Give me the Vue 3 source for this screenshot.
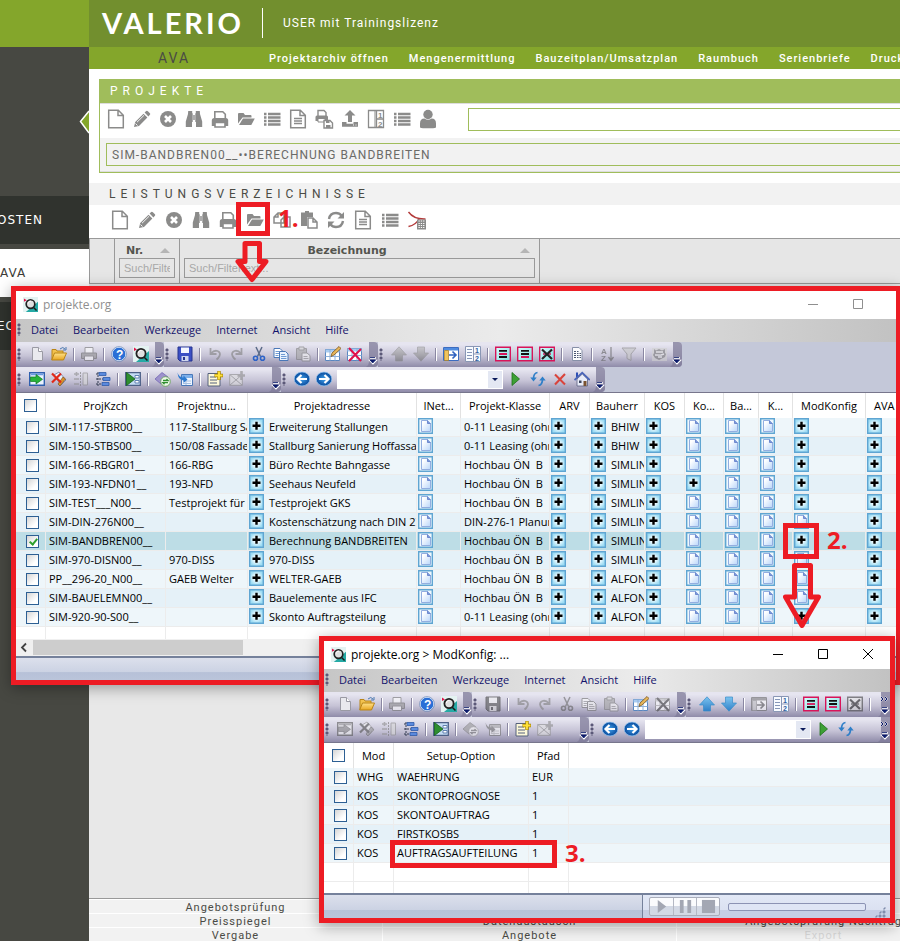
<script setup>
const pageTools = ['file', 'pencil', 'cancel', 'bino', 'printer', 'folder', 'list', 'text', 'printsave', 'upload', 'split', 'list', 'user']
const listTools = ['file', 'pencil', 'cancel', 'bino', 'printer', 'folder', 'copies', 'clip', 'sync', 'text', 'list', 'calc']
const navItems = ['Projektarchiv öffnen', 'Mengenermittlung', 'Bauzeitplan/Umsatzplan', 'Raumbuch', 'Serienbriefe', 'Druck']
const menu = ['Datei', 'Bearbeiten', 'Werkzeuge', 'Internet', 'Ansicht', 'Hilfe']
const footer = [
  [{ t: 'Angebotsprüfung' }, { t: 'Preisspiegel' }, { t: 'Vergabe' }],
  [{ t: '' }, { t: 'Datenaustausch' }, { t: 'Angebote' }],
  [{ t: '' }, { t: 'Angebotsprüfung Nachtrag' }, { t: 'Export', dim: true }],
]

/* "|" is a separator, a leading "-" marks a disabled tool */
const tools = (s) => s.split(' ').map((k) => ({ key: k.replace('-', ''), off: k[0] === '-', sep: k === '|' }))

const project = (id, nr, addr, klass, owner, kos = 'doc', mod = 'plus', checked = false) => ({
  checked,
  cells: [
    { t: id }, { t: nr }, { i: 'plus', t: addr }, { i: 'doc' }, { t: klass }, { i: 'plus' },
    { i: 'plus', t: owner }, { i: 'plus' }, { i: kos }, { i: 'doc' }, { i: 'doc' }, { i: mod }, { i: 'plus' },
  ],
})
const option = (mod, name, value) => ({ checked: false, cells: [{ t: mod }, { t: name }, { t: value }, { t: '' }] })

const windows = [
  {
    id: 'projects', title: 'projekte.org', active: false,
    bars: [
      [
        { tools: tools('new open | -printer | help logo') },
        { tools: tools('save | -undo -redo cut copy -paste | gridedit griddel') },
        { tools: tools('-up -down | panel cols | eqa eqb eqx | page | -sort -filter | -gear') },
      ],
      [
        { tools: tools('go strike -align tree | run | house import | note -mail'), pad: true },
        { tools: tools('back fwd'), combo: true, after: tools('play reload cross home') },
      ],
    ],
    cols: [['ProjKzch', 120], ['Projektnu...', 82], ['Projektadresse', 169], ['INet...', 44], ['Projekt-Klasse', 89], ['ARV', 40],
      ['Bauherr', 55], ['KOS', 40], ['Ko...', 39], ['Ba...', 35], ['K...', 34], ['ModKonfig', 73], ['AVA', 0]],
    rows: [
      project('SIM-117-STBR00__', '117-Stallburg Sa', 'Erweiterung Stallungen', '0-11 Leasing (ohne', 'BHIW'),
      project('SIM-150-STBS00__', '150/08 Fassaden', 'Stallburg Sanierung Hoffassade', '0-11 Leasing (ohne', 'BHIW'),
      project('SIM-166-RBGR01__', '166-RBG', 'Büro Rechte Bahngasse', 'Hochbau ÖN\u00a0 B', 'SIMLING'),
      project('SIM-193-NFDN01__', '193-NFD', 'Seehaus Neufeld', 'Hochbau ÖN\u00a0 B', 'SIMLING', 'plus'),
      project('SIM-TEST___N00__', 'Testprojekt für', 'Testprojekt GKS', 'Hochbau ÖN\u00a0 B', 'SIMLING'),
      project('SIM-DIN-276N00__', '', 'Kostenschätzung nach DIN 276', 'DIN-276-1 Planung', 'SIMLING', 'doc', 'doc'),
      project('SIM-BANDBREN00__', '', 'Berechnung BANDBREITEN', 'Hochbau ÖN\u00a0 B', 'SIMLING', 'doc', 'plus', true),
      project('SIM-970-DISN00__', '970-DISS', '970-DISS', 'Hochbau ÖN\u00a0 B', 'SIMLING', 'doc', 'doc'),
      project('PP__296-20_N00__', 'GAEB Welter', 'WELTER-GAEB', 'Hochbau ÖN\u00a0 B', 'ALFONS', 'doc', 'doc'),
      project('SIM-BAUELEMN00__', '', 'Bauelemente aus IFC', 'Hochbau ÖN\u00a0 B', 'ALFONS', 'doc', 'doc'),
      project('SIM-920-90-S00__', '', 'Skonto Auftragsteilung', '0-11 Leasing (ohne', 'ALFONS'),
    ],
  },
  {
    id: 'config', title: 'projekte.org > ModKonfig: ...', active: true,
    bars: [
      [
        { tools: tools('new open | -printer | help logo') },
        { tools: tools('-save | -undo -redo -cut -copy -paste | gridedit -griddel') },
        { tools: tools('up down | -panel cols | eqa eqb -eqx |'), fill: true },
      ],
      [
        { tools: tools('-go -strike -align tree | run | -house -import | note -mail'), pad: true },
        { tools: tools('back fwd'), combo: true, after: tools('play reload'), fill: true },
      ],
    ],
    cols: [['Mod', 40], ['Setup-Option', 135], ['Pfad', 40], ['', 0]],
    rows: [
      option('WHG', 'WAEHRUNG', 'EUR'),
      option('KOS', 'SKONTOPROGNOSE', '1'),
      option('KOS', 'SKONTOAUFTRAG', '1'),
      option('KOS', 'FIRSTKOSBS', '1'),
      option('KOS', 'AUFTRAGSAUFTEILUNG', '1'),
    ],
  },
]
</script>

<template>
  <div class="desktop">
    <svg class="sprite" aria-hidden="true">
      <defs>
        <linearGradient id="gFolder" x1="0" y1="0" x2="0" y2="1"><stop offset="0" stop-color="#ffe28a" /><stop offset="1" stop-color="#e8a520" /></linearGradient>
        <linearGradient id="gBlue" x1="0" y1="0" x2="0" y2="1"><stop offset="0" stop-color="#7cc4f0" /><stop offset="1" stop-color="#2f80c8" /></linearGradient>
        <radialGradient id="gBall"><stop offset="0" stop-color="#3ea0ea" /><stop offset="1" stop-color="#0a4a9c" /></radialGradient>
        <radialGradient id="gPlus"><stop offset="0.3" stop-color="#f4fdff" /><stop offset="1" stop-color="#9ddcf4" /></radialGradient>
        <linearGradient id="gDoc" x1="0" y1="0" x2="1" y2="1"><stop offset="0.2" stop-color="#fff" /><stop offset="1" stop-color="#b9d6fa" /></linearGradient>
        <linearGradient id="gTeal" x1="0" y1="0" x2="1" y2="1"><stop offset="0" stop-color="#d8ffff" /><stop offset="1" stop-color="#7fdede" /></linearGradient>
      </defs>

      <!-- page icons, 20 x 20 -->
      <symbol id="file" viewBox="0 0 20 20"><path d="M2.700 1.200h9.600l5 5v12.600H2.700zM12 1.200v5.300h5.300" fill="none" stroke="#8b8b8a" stroke-width="1.500" /></symbol>
      <symbol id="pencil" viewBox="0 0 20 20"><path d="M2 18l1.200-5 8.300-8.300 3.900 3.900L7 16.900zM12.600 3.600l1.600-1.500q.8-.7 1.700.1l2 2q.8.8 0 1.600l-1.500 1.600z" fill="#8b8b8a" /><path d="M5 13.200L12 6.300M3.500 14.500l2 2" stroke="#fff" stroke-width=".9" /></symbol>
      <symbol id="cancel" viewBox="0 0 20 20"><circle cx="10" cy="10" r="8" fill="#8b8b8a" /><path d="M7 7l6 6M13 7l-6 6" stroke="#fff" stroke-width="2.600" /></symbol>
      <symbol id="bino" viewBox="0 0 20 20"><path d="M4.200 2h4v2.200H9V13H8v5H1.800v-5.500L4 5zM15.800 2h-4v2.200H11V13h1v5h6.200v-5.500L16 5z" fill="#8b8b8a" /><path d="M9 6h2v5H9z" fill="#8b8b8a" /><path d="M9 4v9M11 4v9" stroke="#fff" stroke-width=".6" /></symbol>
      <symbol id="printer" viewBox="0 0 20 20"><path d="M4.800 10V2.800h8l2.500 2.500V10" fill="#fff" stroke="#8b8b8a" stroke-width="1.600" /><path d="M1.800 17V11.500q0-2.500 2.500-2.500h11.400q2.500 0 2.500 2.500V17z" fill="#8b8b8a" /><path d="M5 13.500h10V18H5z" fill="#fff" stroke="#8b8b8a" stroke-width="1.600" /></symbol>
      <symbol id="folder" viewBox="0 0 20 20"><path d="M2 14.500V5q0-1 1-1h4.500l1.500 2h5.500q1 0 1 1v1.500H6.500z" fill="#8b8b8a" /><path d="M7 9.500h11.800l-3.500 6.500H3z" fill="#8b8b8a" /></symbol>
      <symbol id="list" viewBox="0 0 20 20"><path d="M2 5h2.500M6 5h12.500M2 8.500h2.500M6 8.500h12.500M2 12h2.500M6 12h12.500M2 15.500h2.500M6 15.500h12.500" stroke="#8b8b8a" stroke-width="2.400" /></symbol>
      <symbol id="text" viewBox="0 0 20 20"><path d="M2.700 1.200h9.600l5 5v12.600H2.700zM12 1.200v5.300h5.300M6 9.500h8M6 12h8M6 14.500h8" fill="none" stroke="#8b8b8a" stroke-width="1.500" /></symbol>
      <symbol id="printsave" viewBox="0 0 20 20"><path d="M4 7V1.500h6l2 2V7" fill="none" stroke="#8b8b8a" stroke-width="1.400" /><path d="M1.500 12V8q0-1.500 1.500-1.500h9.500q1.500 0 1.500 1.500v4z" fill="#8b8b8a" /><path d="M4 9.500h7V13H4z" fill="#fff" stroke="#8b8b8a" /><path d="M10 11.500h6l2.500 2.500v5H10z" fill="#fff" stroke="#8b8b8a" stroke-width="1.400" /><path d="M12 11.500h3.500V14H12zM12 16h4.500v3H12z" fill="#8b8b8a" /></symbol>
      <symbol id="upload" viewBox="0 0 20 20"><path d="M10 1l5.500 5.500H12V13H8V6.500H4.500z" fill="#8b8b8a" /><path d="M2 13h4.500v1.800h7V13H18v4.800H2z" fill="#8b8b8a" /><path d="M13 16h1M15.500 16h1" stroke="#fff" /></symbol>
      <symbol id="split" viewBox="0 0 20 20"><path d="M2.500 1.500h15v17h-15zM10.500 1.500v17M10.500 10h7" fill="none" stroke="#8b8b8a" stroke-width="1.300" /><path d="M9 2v16" stroke="#8b8b8a" stroke-width="2" stroke-opacity=".5" /><text x="12" y="9" class="digit">1</text><text x="12" y="17.500" class="digit">2</text></symbol>
      <symbol id="user" viewBox="0 0 20 20"><circle cx="10" cy="5.500" r="4.700" fill="#8b8b8a" /><path d="M2 18.500v-4Q2 9.500 6.500 9.500q3.500 2.500 7 0Q18 9.500 18 14.500v4q-1 .8-3 .8H5q-2 0-3-.8z" fill="#8b8b8a" /></symbol>
      <symbol id="copies" viewBox="0 0 20 20"><path d="M6 3h6v10H2V7zM6 3v4H2M9 10l3-3h6v10H9z" fill="none" stroke="#8b8b8a" stroke-width="1.500" /></symbol>
      <symbol id="clip" viewBox="0 0 20 20"><path d="M2 2.500h4V1h4v1.500h4V7H8v9H2z" fill="#8b8b8a" /><path d="M9 8h5l4 4v6H9zM14 8v4h4" fill="#fff" stroke="#8b8b8a" stroke-width="1.500" /></symbol>
      <symbol id="sync" viewBox="0 0 20 20"><path d="M3 9q1-6 7-6 3.500 0 5.500 2.500M17 11q-1 6-7 6-3.500 0-5.500-2.500" fill="none" stroke="#8b8b8a" stroke-width="2.400" /><path d="M18 2v6.500h-6.500zM2 18v-6.500h6.500z" fill="#8b8b8a" /></symbol>
      <symbol id="calc" viewBox="0 0 20 20"><path d="M1.500 2Q7 9.500 18.500 9M1.500 16.500Q9 15 12 9" fill="none" stroke="#b33a3a" stroke-width="1.400" /><path d="M10 9.500h9v10h-9z" fill="#8b8b8a" /><path d="M11.500 11h6M11.500 13.500h6M11.500 15.500h6M11.500 17.500h6" stroke="#fff" stroke-dasharray="1.300 1" /></symbol>

      <!-- window icons, 16 x 16 -->
      <symbol id="new" viewBox="0 0 16 16"><path d="M3.500 1.500h6l4 4v9h-10z" fill="#e9e9ee" stroke="#9a9aa4" /><path d="M9.500 1.500v4h4" fill="#fff" stroke="#9a9aa4" /></symbol>
      <symbol id="open" viewBox="0 0 16 16"><path d="M1 13.500V3.500h4l1 1.500h6v3" fill="#f2c24e" stroke="#b98417" /><path d="M.7 14l2.800-7h12L12.500 14z" fill="url(#gFolder)" stroke="#b98417" /><path d="M9 3q3-3 5 0m1-2v3h-3" fill="none" stroke="#4a78b0" /></symbol>
      <symbol id="printer16" viewBox="0 0 16 16"><path d="M4 7V1.500h8V7" fill="#fff" stroke="#6f7787" /><path d="M.5 7h15v5.500H.5z" fill="#8b93a5" stroke="#626a7a" /><path d="M3.500 10h9v4.500h-9z" fill="#fff" stroke="#6f7787" /></symbol>
      <symbol id="help" viewBox="0 0 16 16"><circle cx="8" cy="8" r="6.800" fill="#2a6fd6" stroke="#dce9fb" /><circle cx="8" cy="8" r="7.400" fill="none" stroke="#5b7cb0" stroke-width=".6" /><text x="5" y="12.500" class="mark">?</text></symbol>
      <symbol id="logo" viewBox="0 0 16 16"><path d="M0 0h16v16H0z" fill="#e4f3f2" /><path d="M16 5v11H3z" fill="#25aaa5" /><path d="M1 1.500l3 2-3 1.500z" fill="#e0144c" /><path d="M11 11l3.500 3.500" stroke="#1a1a1a" stroke-width="1.500" /><circle cx="8" cy="7.500" r="4.600" fill="#e0e0e0" stroke="#222" stroke-width="1.800" /><path d="M5.500 7a2.500 2.500 0 0 1 3-2.500" stroke="#fff" fill="none" /></symbol>
      <symbol id="save" viewBox="0 0 16 16"><path d="M1 1h14v14H3L1 13z" fill="#3b4fc4" stroke="#26348f" /><path d="M4 1.500h8V7H4z" fill="#f3f6ff" /><path d="M4.500 10h7v5h-7z" fill="#cfd6ee" /><path d="M6 11h2v3H6z" fill="#26348f" /></symbol>
      <symbol id="undo" viewBox="0 0 16 16"><path d="M3.500 2v6h6M4 7.500Q7 4 10.500 5q3.500 1.500 2 5-1 2-3 3.500" fill="none" stroke="#77809a" stroke-width="1.800" /></symbol>
      <symbol id="redo" viewBox="0 0 16 16"><path d="M12.500 2v6h-6M12 7.500Q9 4 5.500 5 2 6.500 3.500 10q1 2 3 3.500" fill="none" stroke="#77809a" stroke-width="1.800" /></symbol>
      <symbol id="cut" viewBox="0 0 16 16"><path d="M5 1l4.500 9.500M11 1L6.500 10.500" stroke="#5b6b88" stroke-width="1.500" /><circle cx="4.500" cy="12.200" r="2" fill="none" stroke="#2d63c8" stroke-width="1.600" /><circle cx="11.500" cy="12.200" r="2" fill="none" stroke="#2d63c8" stroke-width="1.600" /></symbol>
      <symbol id="copy" viewBox="0 0 16 16"><path d="M1 2.500h6l2.500 2.500v6.500H1z" fill="#fff" stroke="#4a78b8" /><path d="M2.500 5.500h4M2.500 7.500h4M2.500 9.500h3" stroke="#6f9ad4" /><path d="M6.500 5.500h6l2.500 2.500v6.500H6.500z" fill="#e9f2ff" stroke="#4a78b8" /><path d="M8 8.500h4M8 10.500h5.500M8 12.500h5.500" stroke="#6f9ad4" /></symbol>
      <symbol id="paste" viewBox="0 0 16 16"><path d="M1.500 2.500h10v11h-10z" fill="#a0a4b2" stroke="#777c8c" /><path d="M4 1h5v3H4z" fill="#d6d8df" stroke="#777c8c" /><path d="M7 7h5l3 2.500V15H7z" fill="#f4f4f7" stroke="#777c8c" /><path d="M8.500 10.500h4M8.500 12.500h5" stroke="#9297a5" /></symbol>
      <symbol id="gridedit" viewBox="0 0 16 16"><path d="M.5 3.500h14v11H.5z" fill="#fff" stroke="#5a86bf" /><path d="M.5 3.500h14v3H.5z" fill="#a9cbf0" /><path d="M.5 10.500h14M5 4v10.500M10 4v10.500" stroke="#8fb1da" /><path d="M6 10.500l1-3.500 7-6.500 2 2-7 6.500z" fill="#e7b65a" stroke="#7a5520" stroke-width=".8" /></symbol>
      <symbol id="griddel" viewBox="0 0 16 16"><path d="M.5 2.500h14v12H.5z" fill="#fff" stroke="#5a86bf" /><path d="M.5 2.500h14v3H.5z" fill="#a9cbf0" /><path d="M.5 9.500h14M5 3v11.500M10 3v11.500" stroke="#8fb1da" /><path d="M2 2l12 13M14 3L2 15" stroke="#e0104a" stroke-width="2" /></symbol>
      <symbol id="up" viewBox="0 0 16 16"><path d="M8 .8L15.500 9H11.500v6h-7V9H.5z" fill="url(#gBlue)" stroke="#3a8cc8" stroke-width=".7" /></symbol>
      <symbol id="down" viewBox="0 0 16 16"><path d="M8 15.200L.5 7h4V1h7v6h4z" fill="url(#gBlue)" stroke="#3a8cc8" stroke-width=".7" /></symbol>
      <symbol id="panel" viewBox="0 0 16 16"><path d="M.5 1.500h15v13H.5z" fill="#fff" stroke="#3c6cc0" /><path d="M1 2h14v2.500H1z" fill="#4f8be0" /><path d="M1.500 4.500h4v10h-4z" fill="#f1c45b" stroke="#a87d1c" stroke-width=".7" /><path d="M6 9h6M9.500 5.500L13 9l-3.500 3.500" fill="none" stroke="#2f62c0" stroke-width="1.600" /></symbol>
      <symbol id="cols" viewBox="0 0 16 16"><path d="M.5 .5h15v15H.5zM8.500 .5v15M8.500 8h7" fill="#f8fbff" stroke="#8a97b5" /><path d="M2 3.500h5M2 6.500h5M2 9.500h5M2 12.500h5" stroke="#8596b8" /><text x="10" y="7" class="tiny">1</text><text x="10" y="14.500" class="tiny">2</text></symbol>
      <symbol id="eqa" viewBox="0 0 16 16"><path d="M.7 1.200h14.600v13.600H.7z" fill="url(#gTeal)" stroke="#d8145a" stroke-width="1.400" /><path d="M4 4.800h8M4 11h8" stroke="#111" stroke-width="1.800" /><path d="M4 8h8" stroke="#d8145a" stroke-width="1.800" /></symbol>
      <symbol id="eqb" viewBox="0 0 16 16"><path d="M.7 1.200h14.600v13.600H.7z" fill="url(#gTeal)" stroke="#d8145a" stroke-width="1.400" /><path d="M4 4.800h8M4 8h8" stroke="#111" stroke-width="1.800" /><path d="M4 11h8" stroke="#d8145a" stroke-width="1.800" /></symbol>
      <symbol id="eqx" viewBox="0 0 16 16"><path d="M.7 1.200h14.600v13.600H.7z" fill="url(#gTeal)" stroke="#d8145a" stroke-width="1.400" /><path d="M4 8h8" stroke="#d8145a" stroke-width="1.500" /><path d="M3 3.500l10 9.500M13 3.500L3 13" stroke="#222" stroke-width="2.200" /></symbol>
      <symbol id="page" viewBox="0 0 16 16"><path d="M3.500 1.500h6.500l3 3v10H3.500z" fill="#fbfbfd" stroke="#8790a8" /><path d="M5 5.500h2M8 5.500h1.500M5 7.500h2M8 7.500h1.500M10.500 7.500H12M5 9.500h2M8 9.500h1.500M10.500 9.500H12M5 11.500h2M8 11.500h1.500M10.500 11.500H12" stroke="#4b5570" /></symbol>
      <symbol id="sort" viewBox="0 0 16 16"><text x="2" y="7.500" class="small">A</text><text x="2" y="15" class="small">Z</text><path d="M12 1v12M9.500 11L12 14.500l2.500-3.500" fill="none" stroke="#5c6070" stroke-width="1.300" /></symbol>
      <symbol id="filter" viewBox="0 0 16 16"><path d="M1 2h14L10 8v6.500l-4-2V8z" fill="#c3c6d0" stroke="#83889a" /></symbol>
      <symbol id="gear" viewBox="0 0 16 16"><path d="M1 2h15v13H1z" fill="#cfd1da" /><path d="M3 3l2 1.500L8 3l3 1.500L14 3v4l1 1-1 3-3 1.500L8 14l-4-2-2-3 1-2z" fill="#777b8a" /><path d="M5 6h7M4 9h6l3-1M7 11h4" stroke="#ececf2" stroke-width="1.400" /></symbol>
      <symbol id="go" viewBox="0 0 16 16"><path d="M.7 1.700h14.600v12.600H.7z" fill="#eaf2ff" stroke="#2f5fae" stroke-width="1.400" /><path d="M2 2.500h12v1.800H2z" fill="#6b9ae0" /><path d="M1.500 6H7V3.500l6.500 4.800L7 13v-2.500H1.500z" fill="#27b33a" stroke="#107a20" stroke-width=".7" /></symbol>
      <symbol id="strike" viewBox="0 0 16 16"><path d="M3 4l5-3 7 8-5 5z" fill="#e9eefa" stroke="#6c7ba0" stroke-width=".8" /><path d="M7 13l5-7 2.500 2L9 15z" fill="#d8922c" stroke="#6e4310" stroke-width=".6" /><path d="M1 2.500l9 9M10 2.500l-9 9" stroke="#e02a1a" stroke-width="2.200" /></symbol>
      <symbol id="align" viewBox="0 0 16 16"><path d="M1 3h5M3.500 1v4M1 8h5M1 13h5" stroke="#888c9b" stroke-width="1.600" /><path d="M7.500 1v14" stroke="#777" stroke-dasharray="2 1" /><path d="M10 2h4.500v12H10z" fill="#d5d7df" stroke="#888c9b" /></symbol>
      <symbol id="tree" viewBox="0 0 16 16"><path d="M3 1v14M1 3h3M1 8h8M1 13h8" stroke="#333a50" fill="none" stroke-dasharray="2 1" /><path d="M4 1.500h7v3H4zM8 6.500h7v3H8zM7 11.500h7v3H7z" fill="#5b8ade" stroke="#2f5aa8" stroke-width=".8" /></symbol>
      <symbol id="run" viewBox="0 0 16 16"><path d="M.7 1.700h14.600v12.600H.7z" fill="#c5dcf4" stroke="#4c5f86" stroke-width="1.300" /><path d="M10 4.500h4v2.500h-4zM10 9.500h4V12h-4z" fill="#fff" stroke="#5577aa" stroke-width=".9" /><path d="M1.500 1.500L10 8l-8.500 6.500z" fill="#2f8f2f" stroke="#145f18" stroke-width=".8" /></symbol>
      <symbol id="house" viewBox="0 0 16 16"><path d="M0 8L7 1.500l6 4.500-7 7z" fill="#9d92cc" stroke="#6b5db0" stroke-width=".7" /><circle cx="10.500" cy="10.500" r="4.800" fill="#eef7ea" stroke="#5fa04e" stroke-width=".8" /><path d="M8 9.500h5l-1.500-1.500M13 11.700H8l1.500 1.500" stroke="#2f8f2f" stroke-width="1.300" fill="none" /></symbol>
      <symbol id="import" viewBox="0 0 16 16"><path d="M4.500 3.500h11v11h-11z" fill="#eef5ff" stroke="#4a78b8" /><path d="M5 4h10v3H5z" fill="#7fb0ea" /><path d="M6 10h8M6 12.500h8M9 8v6" stroke="#a5bfe0" /><path d="M.5 1.500q1.500 5 6 5V4.500l4 4-4 3.500v-2.500Q1 9 .5 1.500z" fill="#2d7ad0" /></symbol>
      <symbol id="note" viewBox="0 0 16 16"><path d="M1 2.500h12V15H1z" fill="#fdf8d8" stroke="#55617c" /><path d="M3 6h6M3 9h7M3 12h7" stroke="#55617c" stroke-width="1.200" /><path d="M12 0v9M7.500 4.500h8.500" stroke="#a88500" stroke-width="3.400" /><path d="M12 .5v8M8 4.500h7.500" stroke="#ffe13a" stroke-width="1.900" /></symbol>
      <symbol id="mail" viewBox="0 0 16 16"><path d="M.7 3.500h12.600v10.800H.7zM.7 3.500l12.600 10.800M13.300 3.500L.7 14.300" fill="#dfe0e6" stroke="#888c9b" /><path d="M12.500 0v9M8.500 4.500H16" stroke="#888c9b" stroke-width="2.600" /></symbol>
      <symbol id="back" viewBox="0 0 16 16"><ellipse cx="8" cy="8" rx="7.800" ry="6.900" fill="url(#gBall)" stroke="#8fc6f4" stroke-width=".7" /><path d="M13 8H4M7.500 4L3.500 8l4 4" fill="none" stroke="#fff" stroke-width="2.200" /></symbol>
      <symbol id="fwd" viewBox="0 0 16 16"><ellipse cx="8" cy="8" rx="7.800" ry="6.900" fill="url(#gBall)" stroke="#8fc6f4" stroke-width=".7" /><path d="M3 8h9M8.500 4l4 4-4 4" fill="none" stroke="#fff" stroke-width="2.200" /></symbol>
      <symbol id="play" viewBox="0 0 16 16"><path d="M4 1.500L11.500 8 4 14.500z" fill="#3da035" stroke="#1f6f1b" stroke-width=".8" /></symbol>
      <symbol id="reload" viewBox="0 0 16 16"><path d="M7.500 1.500Q3.500 2 3.500 8M8.500 14.500q4-.5 4-6.500" fill="none" stroke="#2f7fc8" stroke-width="1.700" /><path d="M.3 6.500h6.400L3.500 10.500zM9.300 9.500h6.400L12.500 5.500z" fill="#2f7fc8" /></symbol>
      <symbol id="cross" viewBox="0 0 16 16"><path d="M3 3.500l10 10M13 3L3 13.500" stroke="#d9443c" stroke-width="2.100" /></symbol>
      <symbol id="home" viewBox="0 0 16 16"><path d="M3 8v7h10.500V8L8.300 3z" fill="#e9ecf8" stroke="#5a5f80" stroke-width=".8" /><path d="M2 1.500h2V6H2z" fill="#2d4fb4" /><path d="M.5 9L8.200 1.700 15.800 9" fill="none" stroke="#4a64b8" stroke-width="1.800" /><path d="M9.500 10h3v5h-3z" fill="#7a5230" /><path d="M5 9.500h2.500v2.500H5z" fill="#3a4560" /></symbol>

      <!-- table cell icons, 15 x 16 -->
      <symbol id="plus" viewBox="0 0 15 16"><path d="M.7 .7h13.600v14.600H.7z" fill="url(#gPlus)" stroke="#5fa5d2" stroke-width="1.400" /><path d="M7.500 3.700v8M3.500 7.700h8" stroke="#000" stroke-width="2.400" /></symbol>
      <symbol id="doc" viewBox="0 0 15 16"><path d="M.7 .7h13.600v14.600H.7z" fill="#eef8fe" stroke="#5fa5d2" stroke-width="1.400" /><path d="M3.500 2.500h6l3 3v8h-9z" fill="url(#gDoc)" stroke="#93aee0" /><path d="M9.500 2.500v3h3" fill="#7f9ad8" stroke="#5c78c8" stroke-width=".8" /></symbol>
    </svg>

    <aside class="side">
      <div class="side-top"></div>
      <div class="side-gap"><svg class="marker" viewBox="0 0 10 24" aria-hidden="true"><path d="M10 1L1.500 11.500 10 23" fill="#84a62b" stroke="#fff" stroke-width="1.500" /></svg></div>
      <a href="#kosten" class="side-link">OSTEN</a>
      <a href="#ava" class="side-link current">AVA</a>
      <a href="#rec" class="side-link">EC</a>
    </aside>

    <main class="main">
      <header class="brand">
        <h1>VALERIO</h1>
        <span class="license">USER mit Trainingslizenz</span>
      </header>
      <nav class="nav">
        <span class="nav-title">AVA</span>
        <a v-for="n in navItems" :key="n" href="#nav">{{ n }}</a>
      </nav>

      <section class="projects">
        <h2>PROJEKTE</h2>
        <div class="ptools">
          <button v-for="(t, k) in pageTools" :key="k" type="button" class="ptool" :aria-label="t"><svg aria-hidden="true"><use :href="'#' + t" /></svg></button>
          <input type="text" class="search" aria-label="Suche" />
        </div>
        <div class="chosen"><input type="text" value="SIM-BANDBREN00__••BERECHNUNG BANDBREITEN" aria-label="Projekt" /></div>
      </section>

      <h2 class="lv-title">LEISTUNGSVERZEICHNISSE</h2>
      <div class="ltools">
        <button v-for="(t, k) in listTools" :key="k" type="button" class="ltool" :aria-label="t"><svg aria-hidden="true"><use :href="'#' + t" /></svg></button>
      </div>

      <div class="lv">
        <div class="lv-cell lv-mark"></div>
        <div class="lv-cell lv-nr">
          <label for="fnr">Nr.</label><i class="tri"></i>
          <input id="fnr" type="text" placeholder="Such/Filtertext..." />
        </div>
        <div class="lv-cell lv-name">
          <label for="fname">Bezeichnung</label><i class="tri"></i>
          <input id="fname" type="text" placeholder="Such/Filtertext..." />
        </div>
        <div class="lv-cell"></div>
      </div>
      <div class="lv-body"></div>

      <footer class="foot">
        <div v-for="(c, k) in footer" :key="k" class="foot-col">
          <span v-for="(l, j) in c" :key="j" :class="{ dim: l.dim }">{{ l.t }}</span>
        </div>
      </footer>
    </main>

    <section v-for="w in windows" :key="w.id" class="win" :class="[w.id, { active: w.active }]" :aria-label="w.title">
      <div class="title">
        <svg class="ico" aria-hidden="true"><use href="#logo" /></svg>
        <span>{{ w.title }}</span>
        <div class="controls">
          <button type="button" aria-label="Minimieren"><svg viewBox="0 0 12 12"><path d="M1 6.500h10" /></svg></button>
          <button type="button" aria-label="Maximieren"><svg viewBox="0 0 12 12"><path d="M1.500 1.500h9v9h-9z" /></svg></button>
          <button v-if="w.active" type="button" aria-label="Schließen"><svg viewBox="0 0 12 12"><path d="M1 1l10 10M11 1L1 11" /></svg></button>
        </div>
      </div>
      <div class="menu"><i class="grip"></i><button v-for="m in menu" :key="m" type="button">{{ m }}</button></div>
      <div class="bars">
        <div v-for="(bar, b) in w.bars" :key="b" class="bar">
          <div v-for="(g, k) in bar" :key="k" class="group" :class="{ pad: g.pad, fill: g.fill }">
            <i class="grip"></i>
            <template v-for="(t, j) in g.tools" :key="j">
              <i v-if="t.sep" class="sep"></i>
              <button v-else type="button" class="tool" :class="{ off: t.off }" :disabled="t.off" :aria-label="t.key"><svg aria-hidden="true"><use :href="t.key === 'printer' ? '#printer16' : '#' + t.key" /></svg></button>
            </template>
            <template v-if="g.combo">
              <span class="combo"><select aria-label="Adresse"><option></option></select></span>
              <button v-for="t in g.after" :key="t.key" type="button" class="tool" :aria-label="t.key"><svg aria-hidden="true"><use :href="'#' + t.key" /></svg></button>
            </template>
            <svg class="cap" viewBox="0 0 12 25" aria-hidden="true">
              <path d="M3 0h9v25H0q3-2 3-5z" fill="#7d7998" fill-opacity=".75" />
              <path v-if="g.fill" d="M3 5l2 2-2 2M7 5l2 2-2 2" fill="none" stroke="#fff" stroke-width="1.300" />
              <path v-if="g.fill" d="M3 5l2 2-2 2M7 5l2 2-2 2" fill="none" stroke="#0a1a6a" />
              <path d="M4 16h6M4 18.500h6L7 21.500z" stroke="#fff" stroke-width="1.600" fill="#fff" /><path d="M4 15.500h5M4 18h5.500L6.700 21z" stroke="#0a1a6a" fill="#0a1a6a" stroke-width=".8" />
            </svg>
          </div>
        </div>
      </div>
      <div class="sheet">
        <table>
          <colgroup><col :style="{ width: '30px' }" /><col v-for="(c, k) in w.cols" :key="k" :style="c[1] ? { width: c[1] + 'px' } : null" /></colgroup>
          <thead>
            <tr>
              <th><input type="checkbox" aria-label="Alle wählen" /></th>
              <th v-for="(c, k) in w.cols" :key="k">{{ c[0] }}</th>
            </tr>
          </thead>
          <tbody>
            <tr v-for="(r, k) in w.rows" :key="k" :class="{ selected: r.checked }">
              <td class="pick"><input type="checkbox" :checked="r.checked" :aria-label="r.cells[0].t" /></td>
              <td v-for="(c, j) in r.cells" :key="j" :class="{ iconic: c.i }"><div class="cell"><svg v-if="c.i" aria-hidden="true"><use :href="'#' + c.i" /></svg><span v-if="c.t">{{ c.t }}</span></div></td>
            </tr>
            <tr class="blank"><td v-for="n in w.cols.length + 1" :key="n"></td></tr>
            <tr v-if="w.active" class="blank short"><td v-for="n in w.cols.length + 1" :key="n"></td></tr>
          </tbody>
        </table>
      </div>
      <div v-if="!w.active" class="hscroll"><svg viewBox="0 0 17 17" aria-hidden="true"><path d="M10 4.500L6 8.500l4 4" fill="none" stroke="#444" stroke-width="1.800" /></svg><div class="thumb"></div></div>
      <div class="status">
        <div v-if="w.active" class="player">
          <div class="keys">
            <button type="button" aria-label="Start"><svg viewBox="0 0 16 16"><path d="M4 1l9 7-9 7z" /></svg></button>
            <button type="button" aria-label="Pause"><svg viewBox="0 0 16 16"><path d="M2 1h4v14H2zM10 1h4v14h-4z" /></svg></button>
            <button type="button" aria-label="Stopp"><svg viewBox="0 0 16 16"><path d="M1 1h14v14H1z" /></svg></button>
          </div>
          <div class="track"></div>
          <i class="corner"></i>
        </div>
      </div>
    </section>

    <div class="ring ring1"></div><b class="step step1">1.</b>
    <svg class="arrow arrow1" viewBox="0 0 34 42" aria-hidden="true"><path d="M10 2.500h14.500V20.500H31L17 38.500 3 20.500h7z" /></svg>
    <div class="ring ring2"></div><b class="step step2">2.</b>
    <svg class="arrow arrow2" viewBox="0 0 38 66" aria-hidden="true"><path d="M11.500 2.500h16V34H35.500L19 62.500 2.500 34h9z" /></svg>
    <div class="ring ring3"></div><b class="step step3">3.</b>
  </div>
</template>

<style>
body { margin: 0; }
.digit { font: bold 8px "Liberation Sans", sans-serif; fill: #8b8b8a; }
.tiny { font: bold 7px "Liberation Sans", sans-serif; fill: #2f5f9f; }
.small { font: bold 8px "Liberation Sans", sans-serif; fill: #5c6070; }
.mark { font: bold 12px "Liberation Sans", sans-serif; fill: #fff; }
</style>

<style scoped>
* { box-sizing: border-box; }
.desktop {
  position: relative; display: grid; grid-template-columns: 89px 1fr; min-height: 100vh; overflow: hidden;
  background: #fff; font-family: Roboto, "Liberation Sans", sans-serif; font-size: 12px; letter-spacing: 1px; color: #4a4b45;
}
.sprite { position: absolute; width: 0; height: 0; }
button { padding: 0; border: 0; background: none; font: inherit; letter-spacing: inherit; color: inherit; }
a { text-decoration: none; color: inherit; }
h1, h2 { margin: 0; font-weight: 400; }

.side { background: #474842; display: flex; flex-direction: column; gap: 5px; }
.side-top { height: 47px; background: #84a62b; }
.side-gap { height: 139px; display: flex; justify-content: flex-end; align-items: center; }
.marker { width: 10px; height: 24px; }
.side-link { height: 48px; line-height: 48px; overflow: hidden; background: #30332e; color: #fff; font-family: "DejaVu Sans", sans-serif; text-indent: -3px; }
.side-link.current { background: #fff; color: #3c3d38; text-indent: 0; }

.main { display: flex; flex-direction: column; min-width: 0; }
.brand { height: 47px; display: flex; align-items: center; background: #728f2e; color: #fff; padding: 0 0 2px 13px; }
.brand h1 { font: bold 29px/30px Lato, sans-serif; letter-spacing: 3px; width: 160px; white-space: nowrap; }
.license { border-left: 1px solid #fff; line-height: 30px; padding-left: 20px; }
.nav { height: 22px; display: flex; align-items: center; gap: 20px; background: #84a62b; color: #fff; font-size: 11px; font-weight: 500; white-space: nowrap; overflow: hidden; }
.nav-title { flex: 0 0 91px; padding-left: 69px; box-sizing: content-box; font-size: 14px; font-weight: 400; letter-spacing: 2px; color: #4a4b45; }

.projects { margin: 10px 0 0 10px; border: 1px solid #a0bd5b; border-right: 0; }
.projects h2 { height: 23px; line-height: 22px; padding-left: 10px; background: #a0bd5b; color: #fff; font-size: 12px; letter-spacing: 5px; }
.ptools { height: 35px; display: flex; align-items: center; padding: 0 0 4px 3px; border-top: 1px solid #ddd; }
.ptool { flex: 0 0 26px; height: 20px; }
.ptool svg, .ltool svg { display: block; width: 20px; height: 20px; margin: 0 auto; }
.search { flex: 1; height: 23px; min-width: 0; margin-left: 27px; border: 1px solid #a0bd5b; border-right: 0; background: #fff; }
.chosen { padding: 5px 0 5px 6px; background: #f2f2f2; border-bottom: 1px solid #ddd; }
.chosen input { display: block; width: 100%; height: 23px; padding: 0 5px; border: 1px solid #a0bd5b; border-right: 0; background: transparent; font: inherit; letter-spacing: inherit; color: #6b6b68; }

.lv-title { margin-top: 10px; height: 22px; line-height: 22px; padding-left: 20px; background: #f2f2f2; font-size: 12px; letter-spacing: 5px; }
.ltools { height: 33px; display: flex; align-items: center; padding: 0 0 3px 17px; }
.ltool { flex: 0 0 27px; height: 20px; }
.lv { display: flex; height: 46px; border-top: 1px solid #999; border-bottom: 1px solid #999; background: #e6e6e6; font: bold 11px/13px "DejaVu Sans", sans-serif; letter-spacing: 0; color: #55554f; }
.lv-cell { flex: 1; border-left: 1px solid #999; }
.lv-mark { flex: 0 0 25px; }
.lv-nr, .lv-name { display: grid; grid-template-columns: 1fr 15px; align-content: center; gap: 1px 0; padding: 0 4px; text-align: center; align-items: center; }
.lv-nr { flex: 0 0 65px; }
.lv-name { flex: 0 0 360px; }
.lv label { padding-right: 10px; }
.tri { width: 0; height: 0; border: 5px solid transparent; border-top: 0; border-bottom: 5px solid #b5b5b5; }
.lv input { grid-column: 1 / 3; height: 20px; min-width: 0; padding: 0 4px; border: 1px solid #999; background: transparent; font: 11px "Liberation Sans", sans-serif; }
.lv input::placeholder { color: #a8a8a8; opacity: 1; }
.lv-body { flex: 1; background: #e8e8e8; border-bottom: 1px solid #999; }
.foot { display: grid; grid-template-columns: 1fr 1fr 1fr; background: #fff; margin-right: -71px; padding-top: 1px; font-size: 11px; text-align: center; }
.foot-col { display: grid; gap: 1px; margin-right: 1px; }
.foot-col span { height: 13px; line-height: 15px; background: #f2f2f2; white-space: nowrap; }
.foot-col .dim { color: #d8d8d8; }

/* floating windows */
.win {
  position: absolute; border: 5px solid #ed1c24; background: #fff; box-shadow: 0 3px 14px rgba(0, 0, 0, .35);
  font-family: "Open Sans", "Noto Sans", sans-serif; font-size: 12px; letter-spacing: 0; color: #000;
}
.projects.win { margin: 0; left: 11px; right: 0; top: 286px; border: 5px solid #ed1c24; border-right-width: 4px; }
.config.win { left: 319px; right: 5px; top: 636px; }
.title { height: 28px; display: flex; align-items: center; gap: 5px; padding: 0 22px 2px 7px; color: #8f8f8f; }
.projects .title { padding-right: 14px; }
.active .title { color: #000; }
.ico { width: 15px; height: 15px; }
.controls { margin-left: auto; display: flex; gap: 33px; }
.projects .controls { padding-right: 18px; }
.controls button { width: 12px; height: 12px; }
.controls svg { display: block; width: 12px; height: 12px; fill: none; stroke: currentColor; }
.active .controls { padding-right: 0; margin-right: -6px; }
.menu { height: 23px; display: flex; align-items: center; gap: 15px; padding-bottom: 2px; color: #13136b; font-size: 11px; background: linear-gradient(90deg, #c6c6c6, #ebebeb 55%, #c2c2c2); }
.grip { flex: 0 0 10px; height: 13px; background: radial-gradient(circle at 3px 2px, #5b5878 1px, transparent 2px) 0 0 / 10px 4px repeat-y; }
.menu .grip { margin-right: -10px; }
.bars { background: #c4c8d9; border-bottom: 1px solid #77768c; }
.bar { display: flex; height: 25px; }
.group { display: flex; align-items: center; height: 25px; border-radius: 0 4px 4px 0; overflow: hidden; background: linear-gradient(#e6e5f0 10%, #c6c3d6 55%, #8f8ba9); }
.group.pad .cap { margin-left: 21px; }
.group.fill { flex: 1; border-radius: 0; }
.tool { flex: 0 0 22px; height: 24px; padding-bottom: 2px; }
.tool svg { display: block; width: 16px; height: 16px; margin: 0 auto; }
.off { filter: grayscale(1); opacity: .6; }
.sep { flex: 0 0 8px; height: 13px; background: linear-gradient(90deg, #8a87a2 1px, #fff 1px) 3px 0 / 2px 13px no-repeat; }
.cap { flex: 0 0 12px; width: 12px; height: 25px; }
.group.fill .cap { margin-left: auto; }
.combo { position: relative; flex: 0 0 166px; height: 19px; margin: 0 2px; background: #fff; }
.combo select { width: 166px; height: 19px; border: 0; background: linear-gradient(#e4e8f3, #e4e8f3) right 1px center / 14px 17px no-repeat; appearance: none; }
.combo::after { content: ""; position: absolute; right: 5px; top: 8px; border: 3px solid transparent; border-bottom: 0; border-top-color: #0a1a5a; pointer-events: none; }

.sheet { overflow: hidden; font-size: 11px; }
table { width: 100%; table-layout: fixed; border-collapse: separate; border-spacing: 0; }
th { height: 25px; padding: 0 0 1px; font-weight: 400; overflow: hidden; white-space: nowrap; border-right: 1px solid #e2e2e2; }
.projects th:last-child { text-align: left; padding-left: 8px; }
td { height: 19px; padding: 0; border-right: 1px solid #ececec; border-bottom: 1px solid #ececec; background: #eef6fa; }
tr:nth-child(even) td { background: #e5f1f8; }
tr.selected td { background: #bddde6; }
tr.blank td { height: 12px; background: #fff; border-bottom: 0; }
.active tr.blank td { height: 19px; border-bottom: 1px solid #ececec; }
.active tr.short td { height: 11px; border-bottom: 0; }
th:last-child, td:last-child { border-right: 0; }
.cell { display: flex; gap: 5px; height: 18px; line-height: 18px; padding-left: 3px; overflow: hidden; white-space: nowrap; }
.iconic .cell { padding-left: 1px; }
.cell svg { flex: 0 0 15px; height: 16px; }
.pick { padding-left: 3px; }
input[type="checkbox"] { appearance: none; display: block; position: relative; width: 13px; height: 13px; margin: 0 auto; border: 1px solid #2d5f93; background: linear-gradient(135deg, #d5d5d5, #fff 70%); }
input[type="checkbox"]:checked::after { content: ""; position: absolute; left: 4px; top: 1px; width: 3px; height: 6px; border: solid #2ea02e; border-width: 0 2px 2px 0; transform: rotate(40deg); }

.hscroll { height: 17px; display: flex; align-items: center; background: #f0f0f0; }
.hscroll svg { width: 17px; height: 17px; }
.thumb { width: 210px; height: 15px; background: #cdcdcd; }
.status { height: 24px; display: flex; justify-content: flex-end; border-top: 2px solid #75819b; background: linear-gradient(#dce0ec, #cbd2e3 65%, #b7c1d8 66%, #bac4da); }
.config .status { height: 25px; }
.player { flex: 0 0 248px; display: flex; align-items: center; gap: 8px; padding-left: 6px; border-left: 1px solid #75819b; background: linear-gradient(#e2e8f6, #dbe1f1 65%, #c6cee4 66%); }
.keys { display: flex; height: 19px; border: 1px solid #a9adba; border-radius: 2px; background: linear-gradient(#fafbfd 50%, #d3d9e5 50%); }
.keys button { width: 23px; }
.keys button + button { border-left: 1px solid #b4b8c4; }
.keys svg { display: block; width: 15px; height: 15px; margin: 0 auto; fill: #a3a7b3; }
.track { width: 138px; height: 8px; border: 1px solid #8c93b4; border-radius: 2px; background: #dfe5f5; }
.corner { align-self: flex-end; width: 12px; height: 12px; background: radial-gradient(circle, #7f8cab 1px, transparent 2px) 0 0 / 4px 4px; clip-path: polygon(100% 0, 100% 100%, 0 100%); }

/* walkthrough marks */
.ring { position: absolute; border: 5px solid #ed1c24; }
.ring1 { left: 236px; top: 202px; width: 34px; height: 34px; }
.ring2 { left: 783px; top: 523px; width: 36px; height: 36px; }
.ring3 { left: 390px; top: 840px; width: 167px; height: 28px; }
.step { position: absolute; font: bold 24px/24px "Open Sans", sans-serif; letter-spacing: 0; color: #ed1c24; }
.step1 { left: 278px; top: 206px; }
.step2 { left: 827px; top: 528px; }
.step3 { left: 565px; top: 841px; }
.arrow { position: absolute; fill: none; stroke: #ed1c24; stroke-width: 5px; stroke-linejoin: round; }
.arrow1 { left: 235px; top: 241px; width: 34px; height: 42px; }
.arrow2 { left: 783px; top: 563px; width: 38px; height: 66px; }
</style>
